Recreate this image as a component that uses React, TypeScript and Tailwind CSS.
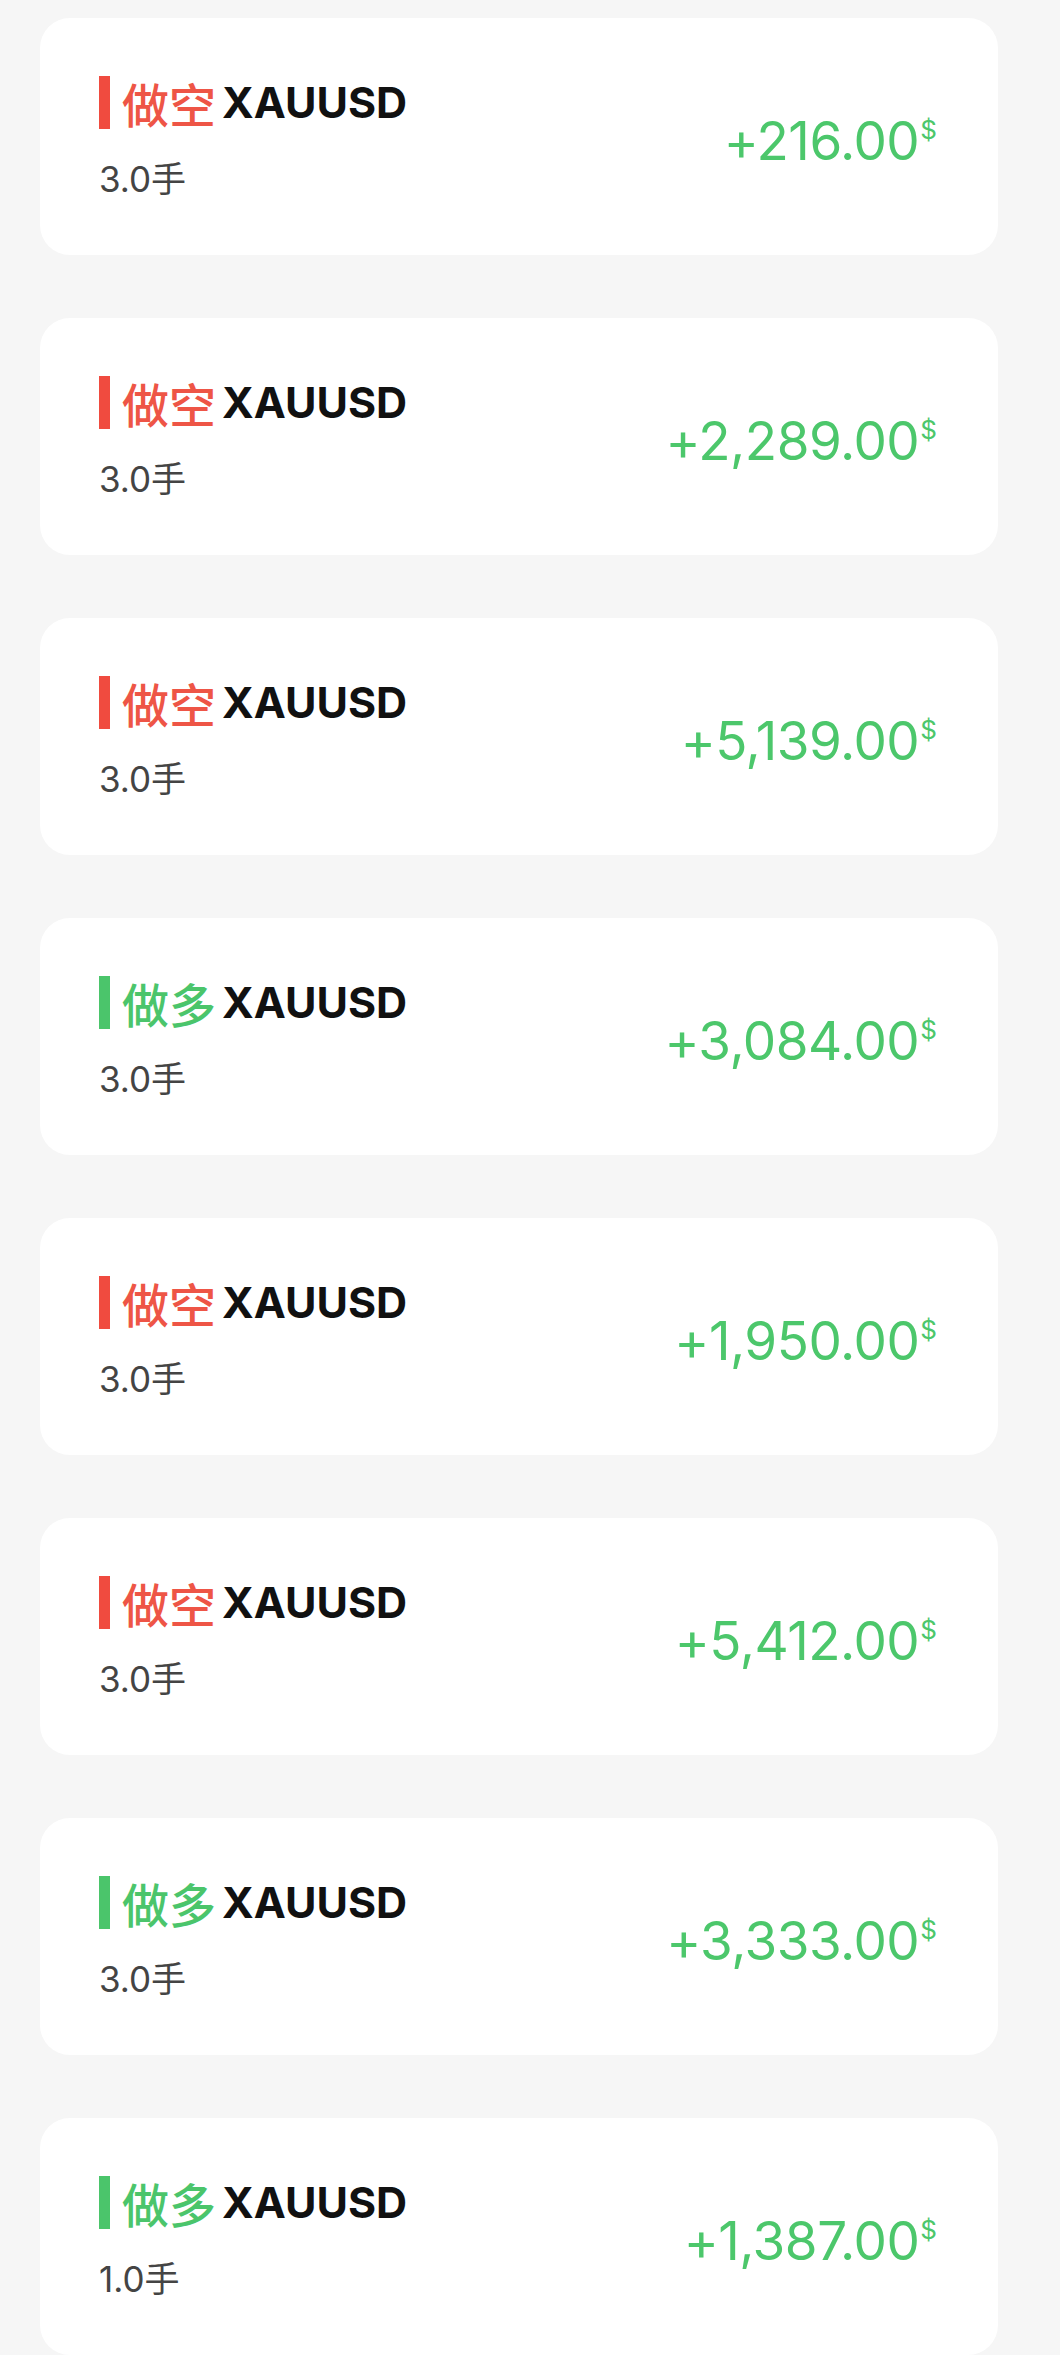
import React from 'react';

type Trade = { side: 'short' | 'long'; lots: string; profit: string };

const trades: Trade[] = [
  { side: 'short', lots: '3.0', profit: '+216.00' },
  { side: 'short', lots: '3.0', profit: '+2,289.00' },
  { side: 'short', lots: '3.0', profit: '+5,139.00' },
  { side: 'long', lots: '3.0', profit: '+3,084.00' },
  { side: 'short', lots: '3.0', profit: '+1,950.00' },
  { side: 'short', lots: '3.0', profit: '+5,412.00' },
  { side: 'long', lots: '3.0', profit: '+3,333.00' },
  { side: 'long', lots: '1.0', profit: '+1,387.00' },
];

const font = { fontFamily: 'Inter, "Noto Sans CJK SC", sans-serif' };
const cjk = { fontFamily: '"Noto Sans CJK SC", sans-serif' };

const TradeCard: React.FC<{ trade: Trade }> = ({ trade }) => {
  const isShort = trade.side === 'short';
  return (
    <div className="flex h-[237px] shrink-0 items-center justify-between rounded-[30px] bg-white pl-[59px] pr-[61px]">
      <div className="flex flex-col">
        <div className="flex h-[53px] items-center">
          <div className={`h-[53px] w-[11px] ${isShort ? 'bg-[#f04b3f]' : 'bg-[#4bc56b]'}`}></div>
          <span
            className={`ml-[12px] text-[47px] font-medium leading-none ${isShort ? 'text-[#ee5546]' : 'text-[#4bc56b]'}`}
            style={cjk}
          >
            {isShort ? '做空' : '做多'}
          </span>
          <span className="ml-[6px] text-[43px] font-bold leading-none text-[#111]">XAUUSD</span>
        </div>
        <div className="mt-[30px] text-[35px] leading-none text-[#444]">
          {trade.lots}
          <span style={cjk}>手</span>
        </div>
      </div>
      <div className="mt-[10px] flex items-start text-[#4cc76b]">
        <span className="text-[53px] leading-none tracking-[-0.5px]">{trade.profit}</span>
        <span className="ml-[1px] mt-[2px] text-[26px] leading-none">$</span>
      </div>
    </div>
  );
};

export default function App() {
  return (
    <div className="min-h-[2355px] bg-[#f6f6f6] pl-[40px] pr-[62px] pt-[18px]" style={font}>
      <div className="flex flex-col gap-[63px]">
        {trades.map((t, i) => (
          <TradeCard key={i} trade={t} />
        ))}
      </div>
    </div>
  );
}
